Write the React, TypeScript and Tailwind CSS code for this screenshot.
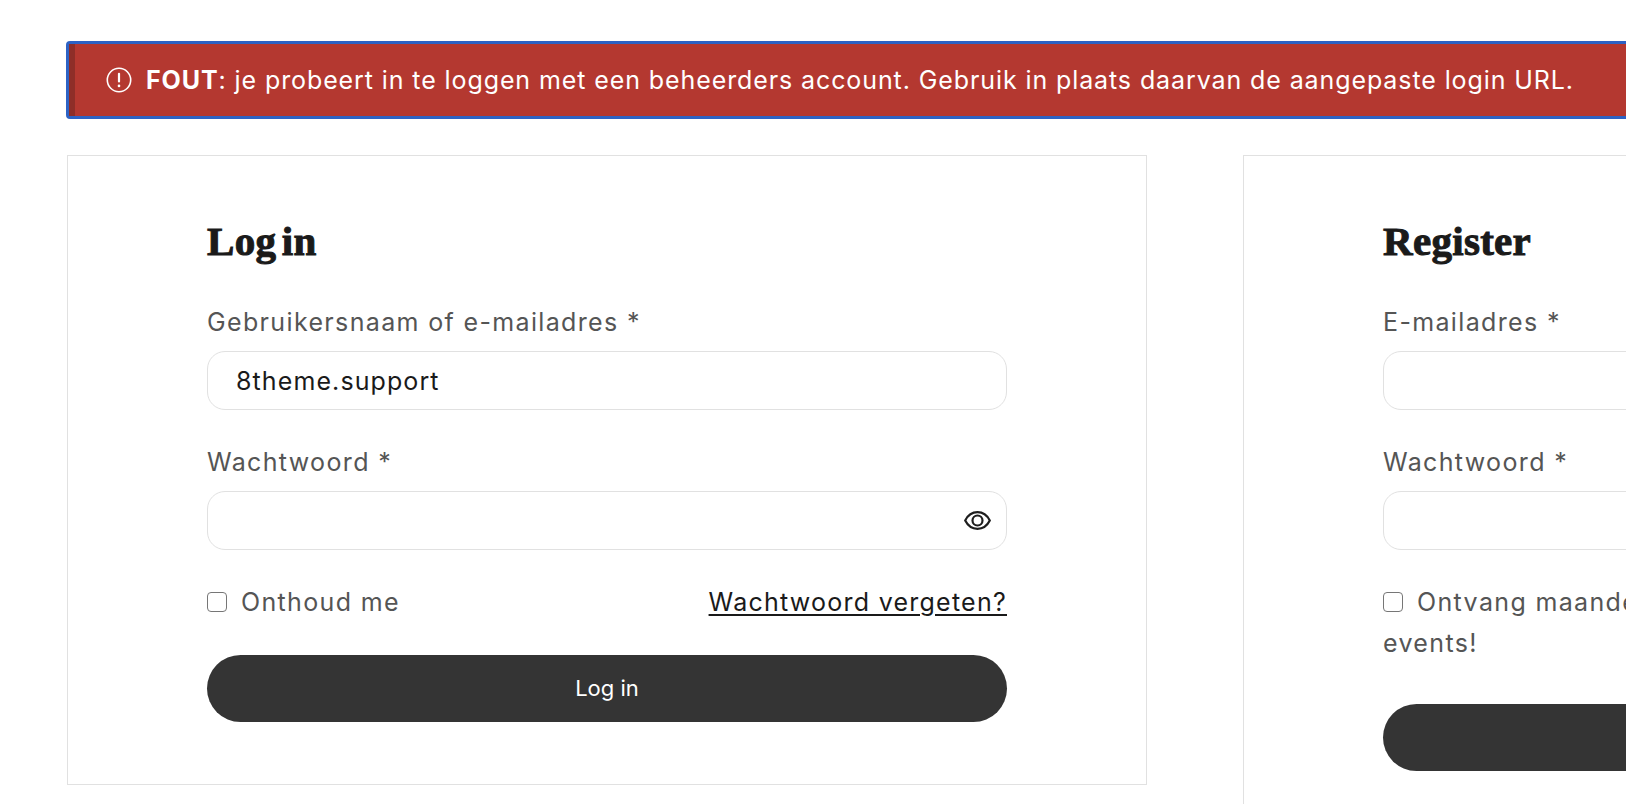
import React from 'react';

const AlertIcon = () => (
  <svg width="26" height="26" viewBox="0 0 26 26" fill="none" stroke="#ffffff" strokeWidth="1.6" strokeLinecap="round" className="ml-[37px] mr-[14px] shrink-0">
    <circle cx="13" cy="13" r="11.7" />
    <path d="M13 6.8V14.4" strokeWidth="2.2" />
    <path d="M13 18.8V18.9" strokeWidth="2.6" />
  </svg>
);

const EyeIcon = () => (
  <svg width="27" height="19" viewBox="0 0 27 19" fill="none" stroke="#1e1e1e" strokeWidth="2.2" className="absolute right-[16px] top-[20px]">
    <path d="M1.2 9.5C4 4 8.5 1.2 13.5 1.2S23 4 25.8 9.5C23 15 18.5 17.8 13.5 17.8S4 15 1.2 9.5Z" />
    <circle cx="13.5" cy="9.5" r="5" />
  </svg>
);

const Field = ({ label, value, eye }: { label: string; value?: string; eye?: boolean }) => (
  <div className="mb-[32px]">
    <label className="block text-[25px] leading-[41px] text-[#555555] tracking-[1.35px] mb-[8px]">{label}</label>
    <div className="relative">
      <input
        readOnly
        value={value ?? ''}
        className="block w-full h-[59px] rounded-[18px] border border-[#e1e1e1] bg-white px-[28px] text-[25px] text-[#1a1a1a] outline-none tracking-[1.1px]"
      />
      {eye && <EyeIcon />}
    </div>
  </div>
);

const CheckBox = () => (
  <span className="inline-block align-[-1px] w-[20px] h-[20px] rounded-[4px] border border-[#767676] bg-white mr-[14px]"></span>
);

const Heading = ({ children }: { children: React.ReactNode }) => (
  <h2 className="font-['Liberation_Serif',serif] font-bold text-[41px] leading-[52px] text-[#1a1a1a] mb-[35px] tracking-[0.3px] [word-spacing:-5px] [-webkit-text-stroke:1px_#1a1a1a]">
    {children}
  </h2>
);

const App = () => {
  return (
    <div className="h-screen w-full overflow-hidden bg-white pt-[41px] pl-[66px] font-['Inter',sans-serif]">
      <div className="w-[1700px] h-[78px] flex items-center rounded-[4px] border-[3px] border-[#2d62c4] bg-[#b43830] text-white text-[25px] relative">
        <div className="absolute left-0 top-0 bottom-0 w-[6px] bg-[#8e2e28]"></div>
        <AlertIcon />
        <span className="whitespace-nowrap tracking-[0.9px] pt-[2px]">
          <b className="font-bold">FOUT</b>: je probeert in te loggen met een beheerders account. Gebruik in plaats daarvan de aangepaste login URL.
        </span>
      </div>

      <div className="mt-[36px] ml-[1px] flex items-start gap-[96px]">
        {/* Log in */}
        <div className="w-[1080px] shrink-0 border border-[#e1e1e1] px-[139px] pt-[59px] h-[630px]">
          <Heading>Log in</Heading>
          <Field label="Gebruikersnaam of e-mailadres *" value="8theme.support" />
          <Field label="Wachtwoord *" eye />
          <div className="flex items-center justify-between text-[25px] leading-[41px]">
            <label className="text-[#555555] tracking-[1.35px]">
              <CheckBox />
              Onthoud me
            </label>
            <a className="text-[#1a1a1a] underline decoration-[2px] underline-offset-[3px] tracking-[1.25px]">Wachtwoord vergeten?</a>
          </div>
          <button className="mt-[32px] w-full h-[67px] rounded-full bg-[#343434] text-white text-[22px]">Log in</button>
        </div>

        {/* Register */}
        <div className="w-[1080px] shrink-0 border border-[#e1e1e1] px-[139px] pt-[59px] h-[700px]">
          <Heading>Register</Heading>
          <Field label="E-mailadres *" />
          <Field label="Wachtwoord *" />
          <div className="text-[25px] leading-[41px] text-[#555555] tracking-[1.35px]">
            <label>
              <CheckBox />
              Ontvang maandelijks onze nieuwsbrief met acties en
              <br />
              events!
            </label>
          </div>
          <button className="mt-[40px] w-full h-[67px] rounded-full bg-[#343434] text-white text-[22px]">Register</button>
        </div>
      </div>
    </div>
  );
};

export default App;
